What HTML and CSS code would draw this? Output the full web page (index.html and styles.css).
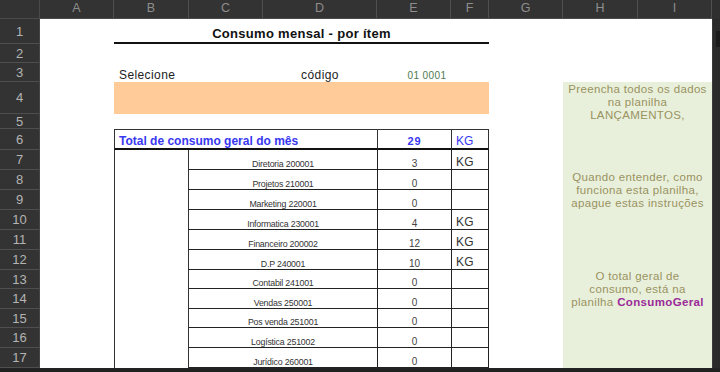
FILE: index.html
```html
<!DOCTYPE html>
<html lang="pt">
<head>
<meta charset="utf-8">
<title>Consumo mensal - por ítem</title>
<link rel="stylesheet" href="styles.css">
</head>
<body>
<div class="sheet">
  <div class="corner"></div>
  <div class="colheads">
    <div class="ch">A</div><div class="ch">B</div><div class="ch">C</div><div class="ch">D</div><div class="ch">E</div><div class="ch">F</div><div class="ch">G</div><div class="ch">H</div><div class="ch">I</div>
  </div>
  <div class="scroll-top"></div>
  <div class="rowheads">
    <div class="rh">1</div><div class="rh">2</div><div class="rh">3</div><div class="rh">4</div><div class="rh">5</div><div class="rh">6</div><div class="rh">7</div><div class="rh">8</div><div class="rh">9</div><div class="rh">10</div><div class="rh">11</div><div class="rh">12</div><div class="rh">13</div><div class="rh">14</div><div class="rh">15</div><div class="rh">16</div><div class="rh">17</div>
  </div>
  <div class="body">
    <div class="title">Consumo mensal - por ítem</div>
    <div class="sel">Selecione</div>
    <div class="cod">código</div>
    <div class="codval">01 0001</div>
    <div class="orange"></div>
    <div class="total">Total de consumo geral do mês</div>
    <div class="total-val">29</div>
    <div class="total-unit">KG</div>
    <div class="items">
      <div class="bcol"></div>
      <div class="name">Diretoria 200001</div><div class="val">3</div><div class="unit">KG</div>
      <div class="name">Projetos 210001</div><div class="val">0</div><div class="unit"></div>
      <div class="name">Marketing 220001</div><div class="val">0</div><div class="unit"></div>
      <div class="name">Informatica 230001</div><div class="val">4</div><div class="unit">KG</div>
      <div class="name">Financeiro 200002</div><div class="val">12</div><div class="unit">KG</div>
      <div class="name">D.P 240001</div><div class="val">10</div><div class="unit">KG</div>
      <div class="name">Contabil 241001</div><div class="val">0</div><div class="unit"></div>
      <div class="name">Vendas 250001</div><div class="val">0</div><div class="unit"></div>
      <div class="name">Pos venda 251001</div><div class="val">0</div><div class="unit"></div>
      <div class="name">Logística 251002</div><div class="val">0</div><div class="unit"></div>
      <div class="name">Jurídico 260001</div><div class="val">0</div><div class="unit"></div>
    </div>
    <div class="note">
      <p class="n1">Preencha todos os dados<br>na planilha<br>LANÇAMENTOS,</p>
      <p class="n2">Quando entender, como<br>funciona esta planilha,<br>apague estas instruções</p>
      <p class="n3">O total geral de<br>consumo, está na<br>planilha <b>ConsumoGeral</b></p>
    </div>
  </div>
  <div class="scroll"><div class="thumb"></div></div>
  <div class="foot"></div>
</div>
</body>
</html>
```
FILE: styles.css
```css
html, body {
  margin: 0;
  padding: 0;
  background: #2b2b2b;
  font-family: "Liberation Sans", Arial, sans-serif;
}
.sheet {
  width: 720px;
  height: 372px;
  display: grid;
  grid-template-columns: 40px 672px 8px;
  grid-template-rows: 19px 349px 4px;
  overflow: hidden;
}
.corner {
  background: #333;
  border-right: 1px solid #4a4a4a;
  border-bottom: 1px solid #4a4a4a;
}
.colheads {
  display: grid;
  grid-template-columns: 74px 75px 74px 114px 74px 38px 74px 75px 74px;
  background: #333;
}
.ch {
  border-right: 1px solid #4f4f4f;
  border-bottom: 1px solid #4a4a4a;
  color: #8e8e8e;
  font-size: 12.5px;
  display: flex;
  align-items: center;
  justify-content: center;
  padding-bottom: 2px;
}
.scroll-top { background: #2f2f2f; }
.rowheads {
  display: grid;
  grid-template-rows: 25px 19px 19px 32px 15px 21px 20px 20px 20px 20px 20px 20px 19px 20px 19px 20px 20px;
  background: #333;
}
.rh {
  border-bottom: 1px solid #4f4f4f;
  border-right: 1px solid #444;
  color: #b4b4b4;
  font-size: 13px;
  display: flex;
  align-items: center;
  justify-content: center;
}
.body {
  background: #fff;
  display: grid;
  grid-template-columns: 74px 75px 74px 114px 74px 38px 74px 75px 74px;
  grid-template-rows: 25px 19px 19px 32px 15px 21px 20px 20px 20px 20px 20px 20px 19px 20px 19px 20px 20px;
}
.title {
  grid-column: 2 / 7;
  grid-row: 1;
  border-bottom: 2px solid #111;
  font-weight: bold;
  font-size: 13px;
  letter-spacing: 0.3px;
  color: #111;
  display: flex;
  align-items: flex-end;
  justify-content: center;
  padding-bottom: 1px;
}
.sel, .cod, .codval {
  grid-row: 3;
  display: flex;
  align-items: flex-end;
  padding-bottom: 0;
  font-size: 12px;
  letter-spacing: 0.4px;
  color: #222;
}
.sel { grid-column: 2 / 4; padding-left: 5px; }
.cod { grid-column: 4; justify-content: center; }
.codval {
  grid-column: 5;
  justify-content: center;
  padding-left: 26px;
  font-size: 10px;
  color: #4f7a4f;
  padding-bottom: 1px;
}
.orange {
  grid-column: 2 / 7;
  grid-row: 4;
  background: #ffcc99;
}
.total, .total-val, .total-unit {
  grid-row: 6;
  border-top: 1px solid #333;
  border-bottom: 2px solid #111;
  color: #3838f0;
  display: flex;
  align-items: flex-end;
  padding-bottom: 0;
}
.total {
  grid-column: 2 / 5;
  border-left: 1px solid #333;
  font-weight: bold;
  font-size: 12px;
  padding-left: 4px;
}
.total-val {
  grid-column: 5;
  border-left: 1px solid #333;
  justify-content: center;
  font-weight: bold;
  font-size: 11px;
  letter-spacing: 1px;
  padding-bottom: 1px;
}
.total-unit {
  grid-column: 6;
  border-left: 1px solid #333;
  border-right: 1px solid #333;
  font-size: 12px;
  padding-left: 4px;
}
.items {
  grid-column: 2 / 7;
  grid-row: 7 / 18;
  display: grid;
  grid-template-columns: 75px 188px 74px 38px;
  grid-template-rows: 20px 20px 20px 20px 20px 20px 19px 20px 19px 20px 20px;
}
.bcol {
  grid-column: 1;
  grid-row: 1 / -1;
  border-left: 1px solid #333;
  border-right: 1px solid #333;
}
.name, .val, .unit {
  border-bottom: 1px solid #222;
  display: flex;
  align-items: flex-end;
  padding-bottom: 0;
  color: #333;
}
.name {
  justify-content: center;
  font-size: 8.8px;
  letter-spacing: -0.2px;
}
.val {
  border-left: 1px solid #222;
  justify-content: center;
  font-size: 10px;
  color: #444;
}
.unit {
  border-left: 1px solid #222;
  border-right: 1px solid #222;
  padding-left: 4px;
  font-size: 12px;
  letter-spacing: 0.3px;
}
.note {
  grid-column: 8 / 10;
  grid-row: 4 / 18;
  background: #e8f0dc;
  display: flex;
  flex-direction: column;
  align-items: center;
  color: #9a925f;
  font-size: 11.5px;
  letter-spacing: 0.35px;
  line-height: 13px;
  text-align: center;
}
.note p { margin: 0; }
.n1 { margin-top: 1px !important; }
.n2 { margin-top: 49px !important; }
.n3 { margin-top: 60px !important; }
.note b { color: #9a2a98; }
.scroll {
  background: #2a2a2a;
  border-left: 1px solid #3a3a3a;
}
.thumb {
  margin: 12px 0 0 3px;
  height: 16px;
  background: #1a1a1a;
}
.foot {
  grid-column: 1 / 4;
  background: #222;
}
```
